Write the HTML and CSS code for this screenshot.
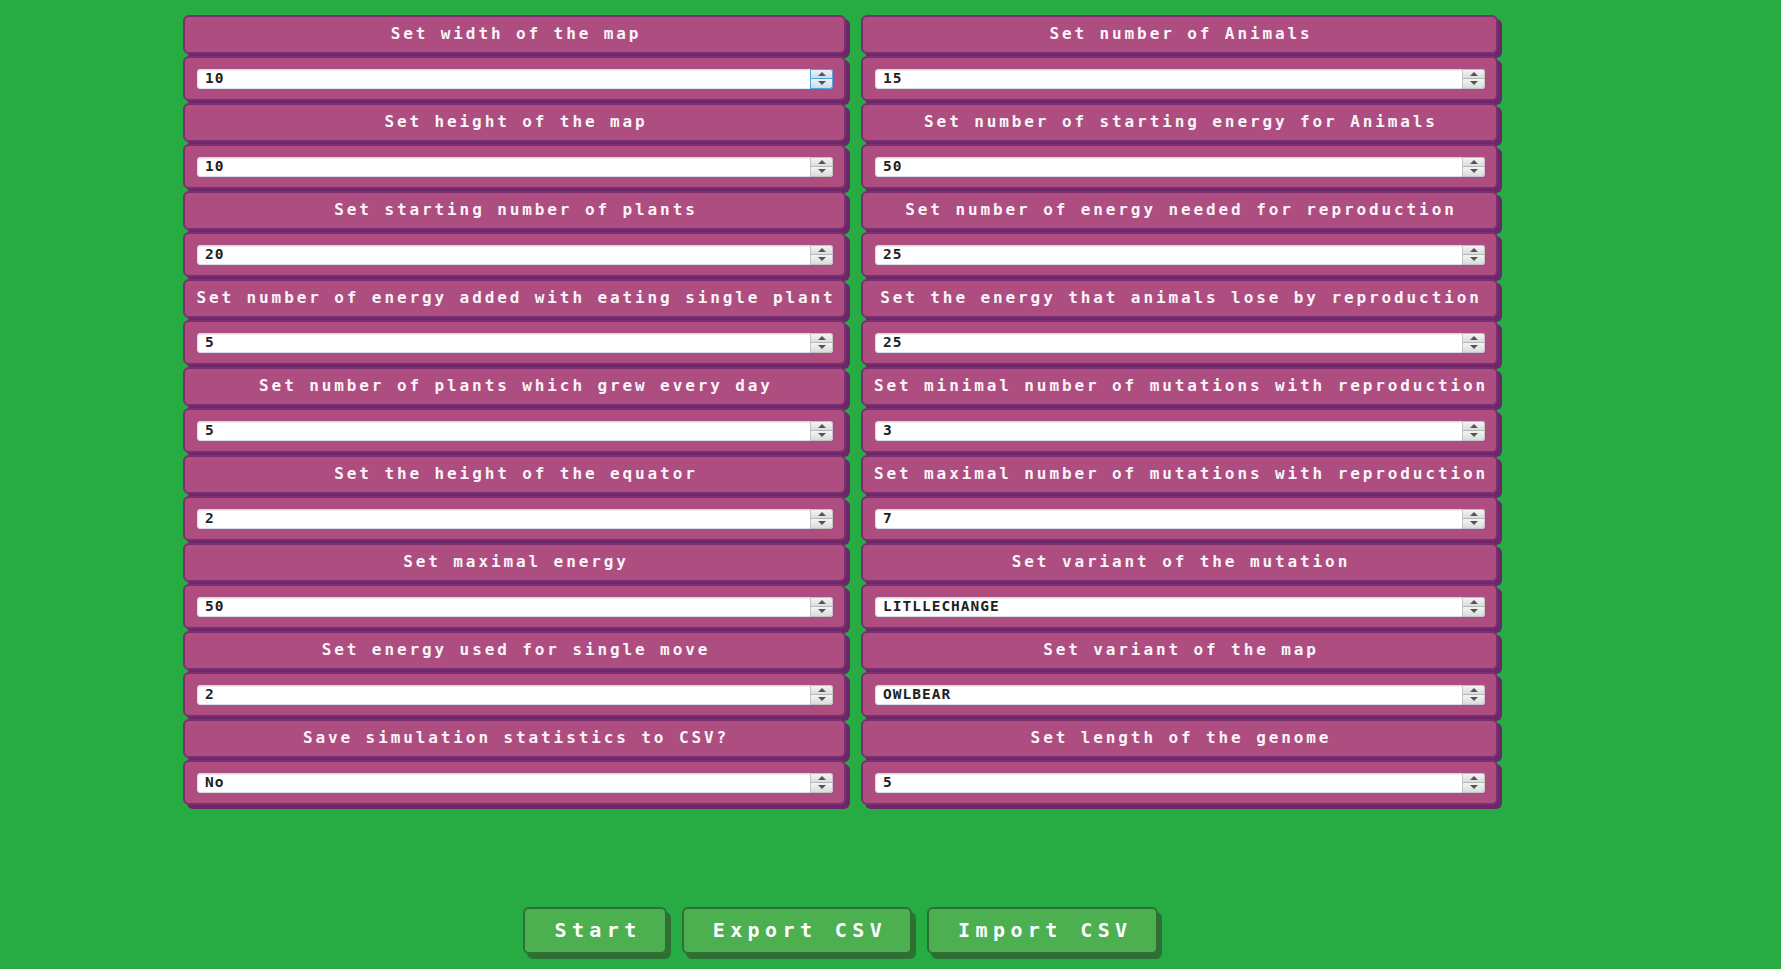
FILE: index.html
```html
<!DOCTYPE html>
<html>
<head>
<meta charset="utf-8">
<title>Simulation settings</title>
<link rel="stylesheet" href="styles.css">
</head>
<body>
<div class="wrapper">
  <div class="columns">
    <div class="col col-left">
      <div class="field"><div class="label">Set width of the map</div><div class="inbox"><div class="input focus"><input class="value" type="text" value="10"><div class="spin active"><span class="btn up"><i></i></span><span class="btn down"><i></i></span></div></div></div></div>
      <div class="field"><div class="label">Set height of the map</div><div class="inbox"><div class="input"><input class="value" type="text" value="10"><div class="spin"><span class="btn up"><i></i></span><span class="btn down"><i></i></span></div></div></div></div>
      <div class="field"><div class="label">Set starting number of plants</div><div class="inbox"><div class="input"><input class="value" type="text" value="20"><div class="spin"><span class="btn up"><i></i></span><span class="btn down"><i></i></span></div></div></div></div>
      <div class="field"><div class="label">Set number of energy added with eating single plant</div><div class="inbox"><div class="input"><input class="value" type="text" value="5"><div class="spin"><span class="btn up"><i></i></span><span class="btn down"><i></i></span></div></div></div></div>
      <div class="field"><div class="label">Set number of plants which grew every day</div><div class="inbox"><div class="input"><input class="value" type="text" value="5"><div class="spin"><span class="btn up"><i></i></span><span class="btn down"><i></i></span></div></div></div></div>
      <div class="field"><div class="label">Set the height of the equator</div><div class="inbox"><div class="input"><input class="value" type="text" value="2"><div class="spin"><span class="btn up"><i></i></span><span class="btn down"><i></i></span></div></div></div></div>
      <div class="field"><div class="label">Set maximal energy</div><div class="inbox"><div class="input"><input class="value" type="text" value="50"><div class="spin"><span class="btn up"><i></i></span><span class="btn down"><i></i></span></div></div></div></div>
      <div class="field"><div class="label">Set energy used for single move</div><div class="inbox"><div class="input"><input class="value" type="text" value="2"><div class="spin"><span class="btn up"><i></i></span><span class="btn down"><i></i></span></div></div></div></div>
      <div class="field"><div class="label">Save simulation statistics to CSV?</div><div class="inbox"><div class="input"><input class="value" type="text" value="No"><div class="spin"><span class="btn up"><i></i></span><span class="btn down"><i></i></span></div></div></div></div>
    </div>
    <div class="col col-right">
      <div class="field"><div class="label">Set number of Animals</div><div class="inbox"><div class="input"><input class="value" type="text" value="15"><div class="spin"><span class="btn up"><i></i></span><span class="btn down"><i></i></span></div></div></div></div>
      <div class="field"><div class="label">Set number of starting energy for Animals</div><div class="inbox"><div class="input"><input class="value" type="text" value="50"><div class="spin"><span class="btn up"><i></i></span><span class="btn down"><i></i></span></div></div></div></div>
      <div class="field"><div class="label">Set number of energy needed for reproduction</div><div class="inbox"><div class="input"><input class="value" type="text" value="25"><div class="spin"><span class="btn up"><i></i></span><span class="btn down"><i></i></span></div></div></div></div>
      <div class="field"><div class="label">Set the energy that animals lose by reproduction</div><div class="inbox"><div class="input"><input class="value" type="text" value="25"><div class="spin"><span class="btn up"><i></i></span><span class="btn down"><i></i></span></div></div></div></div>
      <div class="field"><div class="label">Set minimal number of mutations with reproduction</div><div class="inbox"><div class="input"><input class="value" type="text" value="3"><div class="spin"><span class="btn up"><i></i></span><span class="btn down"><i></i></span></div></div></div></div>
      <div class="field"><div class="label">Set maximal number of mutations with reproduction</div><div class="inbox"><div class="input"><input class="value" type="text" value="7"><div class="spin"><span class="btn up"><i></i></span><span class="btn down"><i></i></span></div></div></div></div>
      <div class="field"><div class="label">Set variant of the mutation</div><div class="inbox"><div class="input"><input class="value" type="text" value="LITLLECHANGE"><div class="spin"><span class="btn up"><i></i></span><span class="btn down"><i></i></span></div></div></div></div>
      <div class="field"><div class="label">Set variant of the map</div><div class="inbox"><div class="input"><input class="value" type="text" value="OWLBEAR"><div class="spin"><span class="btn up"><i></i></span><span class="btn down"><i></i></span></div></div></div></div>
      <div class="field"><div class="label">Set length of the genome</div><div class="inbox"><div class="input"><input class="value" type="text" value="5"><div class="spin"><span class="btn up"><i></i></span><span class="btn down"><i></i></span></div></div></div></div>
    </div>
  </div>
  <div class="actions">
    <button class="action">Start</button>
    <button class="action">Export CSV</button>
    <button class="action">Import CSV</button>
  </div>
</div>
</body>
</html>
```
FILE: styles.css
```css
html, body {
  margin: 0;
  padding: 0;
  background: #27ac43;
  height: 100%;
  overflow: hidden;
}

body {
  font-family: "DejaVu Sans Mono", "Liberation Mono", monospace;
  font-weight: bold;
}

.wrapper {
  width: max-content;
  margin-left: 183px;
  padding-top: 15px;
  display: flex;
  flex-direction: column;
  align-items: center;
}

.columns {
  display: flex;
  gap: 15px;
}

.col {
  display: flex;
  flex-direction: column;
}

.col-left { width: 663px; }
.col-right { width: 637px; }

.field {
  display: flex;
  flex-direction: column;
}

.label,
.inbox {
  box-sizing: border-box;
  background: #ad4d80;
  border: 2px solid #7c2f70;
  border-radius: 6px;
  box-shadow: 4px 4px 0 #6a2769;
  margin-bottom: 2px;
}

.label {
  height: 39px;
  display: flex;
  align-items: center;
  justify-content: center;
  color: #fbf4f8;
  font-size: 16px;
  letter-spacing: 2.9px;
  white-space: nowrap;
  padding: 0 0 3px 3px;
}

.inbox {
  height: 45px;
  display: flex;
  align-items: center;
  padding: 0 11px 0 12px;
}

.input {
  flex: 1;
  height: 20px;
  box-sizing: border-box;
  display: flex;
  align-items: stretch;
  background: #ffffff;
  border: 1px solid #d9dde3;
  border-radius: 3px;
  box-shadow: inset 0 1px 1px rgba(0, 0, 0, 0.08);
}

.input.focus {
  border-color: #dbe7f6;
}

.value {
  flex: 1;
  min-width: 0;
  border: none;
  outline: none;
  background: transparent;
  padding: 0 0 2px 7px;
  font-family: "DejaVu Sans Mono", "Liberation Mono", monospace;
  font-weight: bold;
  font-size: 14.5px;
  letter-spacing: 1px;
  color: #222222;
}

.spin {
  width: 23px;
  display: flex;
  flex-direction: column;
  margin: -1px -1px -1px 0;
}

.spin .btn {
  flex: 1;
  display: flex;
  align-items: center;
  justify-content: center;
  background: linear-gradient(#f4f4f4, #dcdcdc);
  border: 1px solid #c4c4c4;
}

.spin .up {
  border-radius: 0 3px 0 0;
  border-bottom-color: #b8b8b8;
}

.spin .down {
  border-top: none;
  border-radius: 0 0 3px 0;
}

.spin.active .btn {
  border-color: #4ea6dc;
  background: linear-gradient(#e8f2f9, #cfdde8);
}

.spin .btn i {
  display: block;
  width: 0;
  height: 0;
  border-left: 4px solid transparent;
  border-right: 4px solid transparent;
}

.spin .up i { border-bottom: 4px solid #555555; }
.spin .down i { border-top: 4px solid #555555; }

.actions {
  display: flex;
  gap: 15px;
  margin-top: 100px;
}

.action {
  height: 47px;
  box-sizing: border-box;
  padding: 0 23px 2px 29px;
  background: #4caf50;
  border: 2px solid #2f6f36;
  border-radius: 6px;
  box-shadow: 4px 5px 0 #2e7033;
  color: #ffffff;
  font-family: "DejaVu Sans Mono", "Liberation Mono", monospace;
  font-weight: bold;
  font-size: 20px;
  letter-spacing: 5.4px;
  cursor: pointer;
}
```
